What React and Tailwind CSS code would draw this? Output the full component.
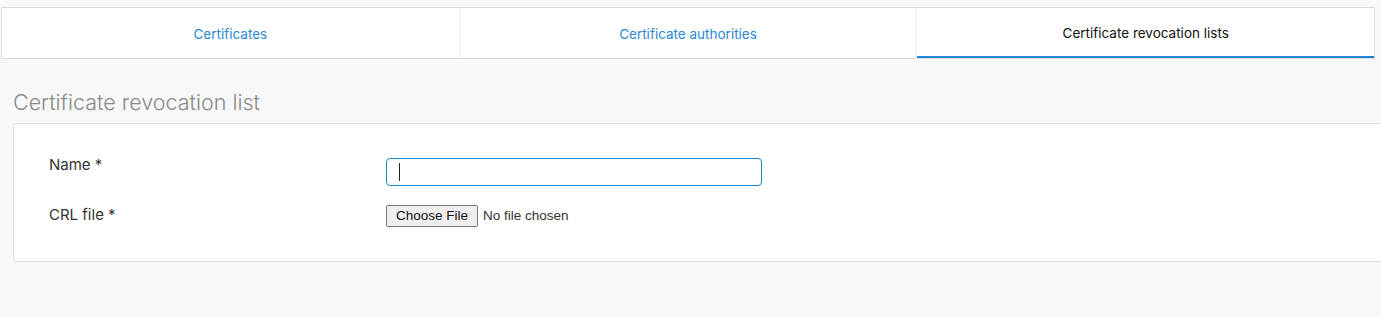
export default function App() {
  const tabs = [
    { label: "Certificates", active: false },
    { label: "Certificate authorities", active: false },
    { label: "Certificate revocation lists", active: true },
  ];
  return (
    <div className="min-h-screen w-full overflow-hidden bg-[#f8f8f8] font-['Inter',sans-serif]">
      <div className="pt-[7px] pl-px pr-[6px]">
        <div className="flex h-[52px] border border-[#dcdcdc] bg-white">
          {tabs.map((t, i) => (
            <div
              key={t.label}
              className={
                "flex flex-1 items-center justify-center text-[13.5px] pt-[2px] " +
                (i < 2 ? "border-r border-[#f0f0f0] " : "") +
                (t.active
                  ? "text-[#111] border-b-2 border-b-[#1b87d0] pt-[3px]"
                  : "text-[#2b8ad3]")
              }
            >
              {t.label}
            </div>
          ))}
        </div>
      </div>

      <div className="pl-[13px]">
        <h2 className="mt-[31px] text-[21.5px] leading-[24px] font-light text-[#8a8a8a]">
          Certificate revocation list
        </h2>
        <div className="mt-[9px] -mr-[20px] h-[139px] rounded-[3px] border border-[#dcdcdc] bg-white pt-[34px] pl-[35px]">
          <div className="flex items-start">
            <div className="w-[337px] -mt-[1px] text-[15px] leading-[16px] text-[#333]">Name *</div>
            <div className="flex h-[28px] w-[376px] items-center rounded-[4px] border border-[#1a88d4] bg-white pl-[12px]">
              <div className="h-[18px] w-px bg-[#222]" />
            </div>
          </div>
          <div className="mt-[19px] flex items-start">
            <div className="w-[337px] pt-[2px] text-[15px] leading-[16px] text-[#333]">CRL file *</div>
            <div className="flex items-center font-['Liberation_Sans',Arial,sans-serif] text-[13.5px]">
              <div className="flex h-[22px] w-[92px] items-center justify-center rounded-[2px] border border-[#767676] bg-[#efefef] text-[#111]">
                Choose File
              </div>
              <span className="ml-[5px] text-[#333]">No file chosen</span>
            </div>
          </div>
        </div>
      </div>
    </div>
  );
}
